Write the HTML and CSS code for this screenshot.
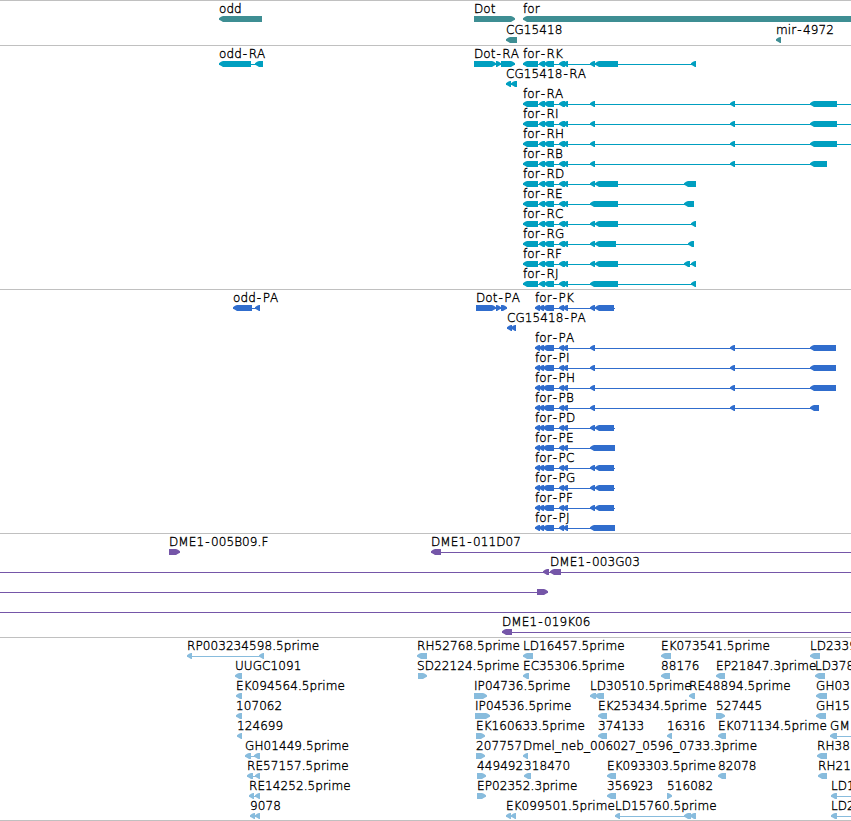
FILE: index.html
```html
<!DOCTYPE html>
<html lang="en">
<head>
    <meta charset="UTF-8">
    <meta name="viewport" content="width=device-width, initial-scale=1.0">
    <title>Genome Tracks</title>
    <link rel="stylesheet" href="styles.css">
</head>
<body>
    <main class="browser">
        <svg class="track gene" id="genes"></svg>
        <svg class="track transcript" id="transcripts"></svg>
        <svg class="track cds" id="cds"></svg>
        <svg class="track bac" id="bacs"></svg>
        <svg class="track est" id="ests"></svg>
    </main>
    <script src="tracks.js"></script>
</body>
</html>
```
FILE: styles.css
```css
body {
    margin: 0;
    background-color: #fff;
    overflow: hidden;
}

.browser {
    display: flex;
    flex-direction: column;
    border-bottom: 1px solid #c0c0c0;
}

.track {
    display: block;
    box-sizing: border-box;
    width: 100%;
    border-top: 1px solid #c0c0c0;
}

.track text {
    font-family: "DejaVu Sans", sans-serif;
    font-size: 12px;
    font-weight: 200;
    font-kerning: none;
    letter-spacing: 0.08px;
    fill: #000;
    stroke: #000;
    stroke-width: 0.35px;
}

.gene {
    height: 45px;
    color: #3e8e93;
}

.transcript {
    height: 244px;
    color: #009fc0;
}

.cds {
    height: 244px;
    color: #306dcd;
}

.bac {
    height: 104px;
    color: #7556a8;
}

.est {
    height: 183px;
    color: #88bcdd;
}

.block,
.intron {
    fill: currentColor;
}
```
FILE: tracks.js
```js
const SVG_NS = "http://www.w3.org/2000/svg";
const EDGE = 860;   // anything past the right side of the view

// Each feature: [row, label, direction, blocks, line start, line end, label x]
const genes = [
    [0, "odd", "<", [[219, 262]]],
    [0, "Dot", ">", [[474, 515]]],
    [0, "for", "<", [[523, EDGE]]],
    [1, "CG15418", "<", [[506, 517]]],
    [1, "mir-4972", "<", [[776, 781]]]
];

const utr = [[523, 538], [539, 545], [544, 554], [559, 565], [563, 568]];
const transcripts = [
    [0, "odd-RA", "<", [[219, 251], [255, 263]]],
    [0, "Dot-RA", ">", [[474, 496], [496, 501], [501, 515]]],
    [0, "for-RK", "<", [...utr, [590, 595], [595, 618], [691, 696]]],
    [1, "CG15418-RA", "<", [[506, 511], [511, 517]]],
    [2, "for-RA", "<", [...utr, [590, 595], [730, 735], [810, 837]], 523, EDGE],
    [3, "for-RI", "<", [...utr, [590, 595], [730, 735], [810, 837]], 523, EDGE],
    [4, "for-RH", "<", [...utr, [590, 595], [730, 735], [810, 837]], 523, EDGE],
    [5, "for-RB", "<", [...utr, [590, 595], [730, 735], [810, 827]]],
    [6, "for-RD", "<", [...utr, [590, 595], [595, 618], [684, 696]]],
    [7, "for-RE", "<", [...utr, [590, 618], [684, 694]]],
    [8, "for-RC", "<", [...utr, [590, 595], [595, 618], [691, 696]]],
    [9, "for-RG", "<", [...utr, [590, 595], [595, 616], [688, 694]]],
    [10, "for-RF", "<", [...utr, [590, 595], [595, 618], [684, 690], [691, 696]]],
    [11, "for-RJ", "<", [...utr, [590, 618], [691, 696]]]
];

const coding = [[535, 540], [539, 544], [543, 554], [559, 564], [563, 568]];
const cds = [
    [0, "odd-PA", "<", [[233, 252], [255, 260]]],
    [0, "Dot-PA", ">", [[476, 496], [496, 501], [501, 507]]],
    [0, "for-PK", "<", [...coding, [590, 595], [595, 614]], 535, 615],
    [1, "CG15418-PA", "<", [[507, 512], [511, 516]]],
    [2, "for-PA", "<", [...coding, [590, 595], [730, 735], [810, 836]]],
    [3, "for-PI", "<", [...coding, [590, 595], [730, 735], [810, 836]]],
    [4, "for-PH", "<", [...coding, [590, 595], [730, 735], [810, 836]]],
    [5, "for-PB", "<", [...coding, [590, 595], [730, 735], [810, 819]]],
    [6, "for-PD", "<", [...coding, [590, 595], [595, 614]], 535, 615],
    [7, "for-PE", "<", [...coding, [590, 615]]],
    [8, "for-PC", "<", [...coding, [590, 595], [595, 614]], 535, 615],
    [9, "for-PG", "<", [...coding, [590, 595], [595, 614]], 535, 615],
    [10, "for-PF", "<", [...coding, [590, 595], [595, 614]], 535, 615],
    [11, "for-PJ", "<", [...coding, [590, 615]]]
];

const bacs = [
    [0, "DME1-005B09.F", ">", [[169, 180]]],
    [0, "DME1-011D07", "<", [[431, 441]], 431, EDGE],
    [1, "", "<", [[543, 549]], 0, 549],
    [1, "DME1-003G03", "<", [[550, 561]], 549, EDGE],
    [2, "", ">", [[537, 548]], 0, 548],
    [3, "", "<", [], 0, EDGE],
    [4, "DME1-019K06", "<", [[502, 512]], 502, EDGE]
];

const ests = [
    [0, "RP003234598.5prime", "<", [[187, 192], [259, 264]]],
    [0, "RH52768.5prime", "<", [[417, 427]]],
    [0, "LD16457.5prime", "<", [[523, 533]]],
    [0, "EK073541.5prime", "<", [[661, 671]]],
    [0, "LD2339", "<", [[810, 820]]],
    [1, "UUGC1091", "<", [[235, 242]]],
    [1, "SD22124.5prime", ">", [[418, 427]], 418, 427, 417],
    [1, "EC35306.5prime", "<", [[523, 529]]],
    [1, "88176", "<", [[661, 670]]],
    [1, "EP21847.3prime", "<", [[716, 725]]],
    [1, "LD378", "<", [[815, 825]]],
    [2, "EK094564.5prime", "<", [[236, 242]]],
    [2, "IP04736.5prime", ">", [[474, 487]]],
    [2, "LD30510.5prime", "<", [[590, 596], [595, 604]]],
    [2, "RE48894.5prime", "<", [[689, 695]]],
    [2, "GH03", "<", [[816, 827]]],
    [3, "107062", "<", [[236, 242]]],
    [3, "IP04536.5prime", ">", [[475, 490]]],
    [3, "EK253434.5prime", "<", [[598, 607]]],
    [3, "527445", ">", [[716, 725]]],
    [3, "GH15", "<", [[816, 826]]],
    [4, "124699", "<", [[237, 242]]],
    [4, "EK160633.5prime", ">", [[476, 485]]],
    [4, "374133", "<", [[598, 607]]],
    [4, "16316", "<", [[667, 672]]],
    [4, "EK071134.5prime", "<", [[718, 726]]],
    [4, "GM", "<", [[830, 837]], 830, EDGE],
    [5, "GH01449.5prime", "<", [[245, 251], [254, 260]]],
    [5, "207757", ">", [[476, 485]]],
    [5, "Dmel_neb_006027_0596_0733.3prime", "<", [[523, 528]]],
    [5, "RH38", "<", [[817, 827]]],
    [6, "RE57157.5prime", "<", [[247, 253], [255, 260]]],
    [6, "449492", ">", [[477, 486]]],
    [6, "318470", "<", [[524, 531]]],
    [6, "EK093303.5prime", "<", [[607, 616]]],
    [6, "82078", "<", [[718, 726]]],
    [6, "RH21", "<", [[818, 827]]],
    [7, "RE14252.5prime", "<", [[249, 254], [255, 260]]],
    [7, "EP02352.3prime", ">", [[477, 486]]],
    [7, "356923", "<", [[607, 616]]],
    [7, "516082", ">", [[667, 672]]],
    [7, "LD1", "<", [[831, 837]], 831, EDGE],
    [8, "9078", "<", [[250, 255], [255, 260]]],
    [8, "EK099501.5prime", "<", [[506, 511], [511, 516]]],
    [8, "LD15760.5prime", "<", [[615, 620], [684, 691], [690, 696]]],
    [8, "LD2", "<", [[831, 837]], 831, EDGE]
];

function add(svg, name, attrs) {
    const el = document.createElementNS(SVG_NS, name);
    for (const key in attrs) {
        el.setAttribute(key, attrs[key]);
    }
    svg.appendChild(el);
    return el;
}

// A bar with a rounded-off arrow head at its tip end
function blockPoints(start, end, top, direction) {
    const sign = direction === "<" ? 1 : -1;
    const tip = direction === "<" ? start : end;
    const tail = direction === "<" ? end : start;
    return [
        [tip, top + 2.3],
        [tip + sign * 2, top + 0.8],
        [tip + sign * 4, top],
        [tail, top],
        [tail, top + 6],
        [tip + sign * 4, top + 6],
        [tip + sign * 2, top + 4.8],
        [tip, top + 3.7]
    ].map(p => p.join(",")).join(" ");
}

// Hyphens get some room on both sides
function labelSpacing(label) {
    const dx = [...label].map((c, i) => {
        if (c === "-") return 1;
        return label[i - 1] === "-" ? 1.4 : 0;
    });
    return dx.join(" ");
}

function drawTrack(id, features, rowHeight) {
    const svg = document.getElementById(id);
    for (const [row, label, direction, blocks, from, to, labelX] of features) {
        const top = row * rowHeight + 15;
        const start = from !== undefined ? from : blocks[0][0];
        const end = to !== undefined ? to : blocks[blocks.length - 1][1];

        if (blocks.length !== 1 || end - start > 20 && from !== undefined) {
            add(svg, "rect", { class: "intron", x: start, y: top + 3, width: end - start, height: 1 });
        }
        for (const [s, e] of blocks) {
            add(svg, "polygon", { class: "block", points: blockPoints(s, e, top, direction) });
        }
        if (label) {
            const text = add(svg, "text", { x: labelX || blocks[0][0], y: top - 3 });
            if (label.includes("-")) {
                text.setAttribute("dx", labelSpacing(label));
            }
            text.textContent = label;
        }
    }
}

drawTrack("genes", genes, 21);
drawTrack("transcripts", transcripts, 20);
drawTrack("cds", cds, 20);
drawTrack("bacs", bacs, 20);
drawTrack("ests", ests, 20);
```
